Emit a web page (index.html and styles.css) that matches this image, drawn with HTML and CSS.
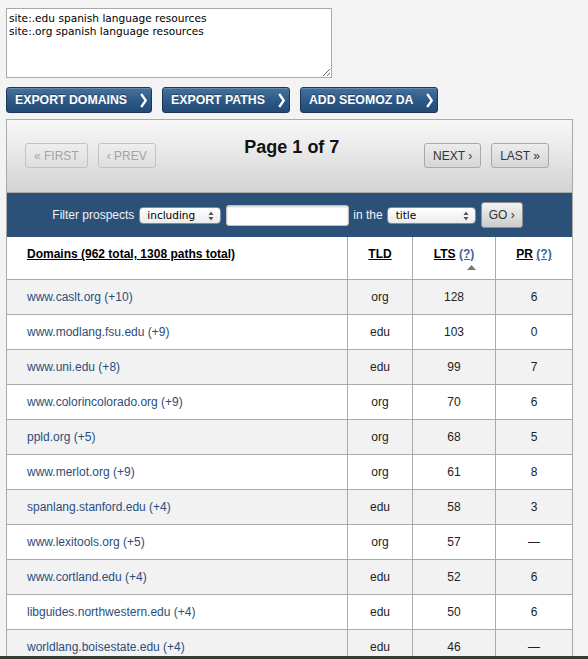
FILE: index.html
```html
<!DOCTYPE html>
<html lang="en">
<head>
<meta charset="utf-8">
<title>Link prospects</title>
<link rel="stylesheet" href="styles.css">
</head>
<body>
<div class="page">
  <textarea class="queries">site:.edu spanish language resources
site:.org spanish language resources</textarea>

  <div class="actions">
    <a class="action-btn" href="#">EXPORT DOMAINS<svg class="chev" width="7" height="15" viewBox="0 0 7 15"><polyline points="1.2,1 5.8,7.5 1.2,14" /></svg></a>
    <a class="action-btn" href="#">EXPORT PATHS<svg class="chev" width="7" height="15" viewBox="0 0 7 15"><polyline points="1.2,1 5.8,7.5 1.2,14" /></svg></a>
    <a class="action-btn" href="#">ADD SEOMOZ DA<svg class="chev" width="7" height="15" viewBox="0 0 7 15"><polyline points="1.2,1 5.8,7.5 1.2,14" /></svg></a>
  </div>

  <div class="panel">
    <div class="pager">
      <div class="pager-group">
        <span class="pg-btn disabled">« FIRST</span>
        <span class="pg-btn disabled">‹ PREV</span>
      </div>
      <h2 class="page-title">Page 1 of 7</h2>
      <div class="pager-group">
        <a class="pg-btn" href="#">NEXT ›</a>
        <a class="pg-btn" href="#">LAST »</a>
      </div>
    </div>

    <form class="filter">
      <label class="filter-label">Filter prospects</label>
      <span class="select select-mode">
        <select><option>including</option><option>excluding</option></select>
        <svg class="updown" width="6" height="10" viewBox="0 0 6 10"><polygon points="3,0.5 5.5,4 0.5,4" /><polygon points="0.5,6 5.5,6 3,9.5" /></svg>
      </span>
      <input class="filter-text" type="text">
      <span class="filter-label">in the</span>
      <span class="select select-field">
        <select><option>title</option><option>url</option></select>
        <svg class="updown" width="6" height="10" viewBox="0 0 6 10"><polygon points="3,0.5 5.5,4 0.5,4" /><polygon points="0.5,6 5.5,6 3,9.5" /></svg>
      </span>
      <button class="go-btn" type="button">GO ›</button>
    </form>

    <div class="results">
      <div class="row head">
        <div class="cell domain"><a href="#">Domains (962 total, 1308 paths total)</a></div>
        <div class="cell"><a href="#">TLD</a></div>
        <div class="cell sorted"><span><a href="#">LTS</a> <a class="help" href="#">(?)</a></span><svg class="sort-arrow" width="9" height="5" viewBox="0 0 9 5"><polygon points="4.5,0 9,5 0,5" /></svg></div>
        <div class="cell"><span><a href="#">PR</a> <a class="help" href="#">(?)</a></span></div>
      </div>
      <div class="row"><div class="cell domain"><a href="#">www.caslt.org (+10)</a></div><div class="cell">org</div><div class="cell">128</div><div class="cell">6</div></div>
      <div class="row"><div class="cell domain"><a href="#">www.modlang.fsu.edu (+9)</a></div><div class="cell">edu</div><div class="cell">103</div><div class="cell">0</div></div>
      <div class="row"><div class="cell domain"><a href="#">www.uni.edu (+8)</a></div><div class="cell">edu</div><div class="cell">99</div><div class="cell">7</div></div>
      <div class="row"><div class="cell domain"><a href="#">www.colorincolorado.org (+9)</a></div><div class="cell">org</div><div class="cell">70</div><div class="cell">6</div></div>
      <div class="row"><div class="cell domain"><a href="#">ppld.org (+5)</a></div><div class="cell">org</div><div class="cell">68</div><div class="cell">5</div></div>
      <div class="row"><div class="cell domain"><a href="#">www.merlot.org (+9)</a></div><div class="cell">org</div><div class="cell">61</div><div class="cell">8</div></div>
      <div class="row"><div class="cell domain"><a href="#">spanlang.stanford.edu (+4)</a></div><div class="cell">edu</div><div class="cell">58</div><div class="cell">3</div></div>
      <div class="row"><div class="cell domain"><a href="#">www.lexitools.org (+5)</a></div><div class="cell">org</div><div class="cell">57</div><div class="cell">—</div></div>
      <div class="row"><div class="cell domain"><a href="#">www.cortland.edu (+4)</a></div><div class="cell">edu</div><div class="cell">52</div><div class="cell">6</div></div>
      <div class="row"><div class="cell domain"><a href="#">libguides.northwestern.edu (+4)</a></div><div class="cell">edu</div><div class="cell">50</div><div class="cell">6</div></div>
      <div class="row"><div class="cell domain"><a href="#">worldlang.boisestate.edu (+4)</a></div><div class="cell">edu</div><div class="cell">46</div><div class="cell">—</div></div>
    </div>
  </div>
</div>
<div class="bottom-edge"></div>
</body>
</html>
```

FILE: styles.css
```css
html, body {
  margin: 0;
  padding: 0;
}

body {
  background: #f3f3f3;
  font-family: "Liberation Sans", Arial, sans-serif;
  font-size: 12px;
  color: #222;
}

.page {
  padding: 8px 0 0 6px;
}

.queries {
  display: block;
  box-sizing: border-box;
  width: 326px;
  height: 70px;
  margin: 0;
  padding: 3px 2px;
  border: 1px solid #a9a9a9;
  background: #fff;
  font-family: "DejaVu Sans", Verdana, sans-serif;
  font-size: 10.6px;
  line-height: 13px;
  color: #000;
}

.actions {
  display: flex;
  gap: 10px;
  margin-top: 9px;
}

.action-btn {
  display: flex;
  align-items: center;
  gap: 13px;
  box-sizing: border-box;
  height: 26px;
  padding: 0 4px 0 8px;
  border: 1px solid #1c3756;
  border-radius: 3px;
  background: linear-gradient(#44729f, #2d5886 55%, #224b75);
  box-shadow: inset 0 1px 0 rgba(255, 255, 255, 0.18);
  color: #fff;
  font-weight: bold;
  font-size: 12.3px;
  text-decoration: none;
  text-shadow: 0 -1px 0 rgba(0, 0, 0, 0.35);
}

.chev polyline {
  fill: none;
  stroke: #fff;
  stroke-width: 2.3;
}

.panel {
  width: 567px;
  box-sizing: border-box;
  margin-top: 6px;
  border: 1px solid #aaa;
  border-bottom: 0;
  background: #fff;
}

.pager {
  display: flex;
  justify-content: space-between;
  align-items: flex-start;
  box-sizing: border-box;
  height: 73px;
  padding: 17px 23px 0 18px;
  border-bottom: 1px solid #aaa;
  background: linear-gradient(#f8f8f8, #d3d3d3);
}

.pager-group {
  display: flex;
  gap: 10px;
  margin-top: 6px;
}

.pg-btn {
  display: flex;
  align-items: center;
  box-sizing: border-box;
  height: 25px;
  padding: 0 8px;
  border: 1px solid #a9a9a9;
  border-radius: 3px;
  background: linear-gradient(#ececec, #d6d6d6);
  color: #333;
  font-size: 12px;
  text-decoration: none;
}

.pg-btn.disabled {
  border-color: #c2c2c2;
  background: linear-gradient(#eeeeee, #dedede);
  color: #a3a3a3;
}

.page-title {
  margin: 0;
  padding-left: 4px;
  font-size: 18px;
  line-height: 21px;
  font-weight: bold;
  color: #111;
}

.filter {
  display: flex;
  align-items: center;
  justify-content: center;
  height: 44px;
  margin: 0;
  padding-right: 4px;
  background: #2b5179;
}

.filter-label {
  color: #f2f2f2;
  font-size: 12px;
  margin-right: 5px;
}

.filter .filter-label + .select-field {
  margin-left: 0;
}

.select {
  position: relative;
  display: block;
}

.select select {
  display: block;
  box-sizing: border-box;
  height: 17px;
  margin: 0;
  padding: 0 0 0 7px;
  -webkit-appearance: none;
  appearance: none;
  border: 1px solid #7c8da0;
  border-radius: 4px;
  background: linear-gradient(#ffffff, #ebebeb);
  font-family: "DejaVu Sans", Verdana, sans-serif;
  font-size: 10.5px;
  line-height: 15px;
  color: #000;
}

.select-mode select {
  width: 82px;
}

.select-field select {
  width: 89px;
  padding-left: 8px;
}

.updown {
  position: absolute;
  right: 7px;
  top: 4px;
  pointer-events: none;
}

.updown polygon {
  fill: #555;
}

.filter-text {
  box-sizing: border-box;
  width: 123px;
  height: 21px;
  margin: 0 4px 0 5px;
  padding: 2px 4px;
  border: 1px solid #c3c3c3;
  border-radius: 3px;
  background: #fff;
  box-shadow: inset 0 1px 2px rgba(0, 0, 0, 0.2);
}

.select-mode {
  margin-left: 0;
}

.filter > .filter-label:nth-of-type(2) {
  margin-right: 4px;
}

.go-btn {
  box-sizing: border-box;
  width: 42px;
  height: 26px;
  margin: 0 0 0 5px;
  padding: 0;
  border: 1px solid #8f8f8f;
  border-radius: 3px;
  background: linear-gradient(#f3f3f3, #cbcbcb);
  color: #333;
  font-family: "Liberation Sans", Arial, sans-serif;
  font-size: 12px;
}

.results {
  background: #fff;
}

.row {
  display: grid;
  grid-template-columns: 340px 65px 83px 77px;
  box-sizing: border-box;
  height: 35px;
  border-top: 1px solid #aaa;
}

.row:nth-child(even) {
  background: #f2f2f2;
}

.row.head {
  height: 42px;
  border-top: 0;
  background: #fff;
}

.cell {
  display: flex;
  align-items: center;
  justify-content: center;
  border-left: 1px solid #aaa;
  color: #222;
  font-size: 12px;
}

.cell.domain {
  justify-content: flex-start;
  padding-left: 20px;
  border-left: 0;
}

.cell a {
  color: #2c4d7c;
  text-decoration: none;
}

.head .cell {
  flex-direction: column;
  align-items: center;
  justify-content: flex-start;
  padding-top: 10px;
  line-height: 14px;
  font-weight: bold;
}

.head .cell.domain {
  align-items: flex-start;
  padding-left: 20px;
}

.head .cell a {
  color: #000;
  text-decoration: underline;
}

.head .cell a.help {
  color: #3b6594;
}

.sort-arrow {
  display: block;
  margin: 4px 0 0 34px;
}

.sort-arrow polygon {
  fill: #777;
}

.bottom-edge {
  position: fixed;
  left: 0;
  right: 0;
  bottom: 0;
  height: 3px;
  background: #3a3832;
}
```
